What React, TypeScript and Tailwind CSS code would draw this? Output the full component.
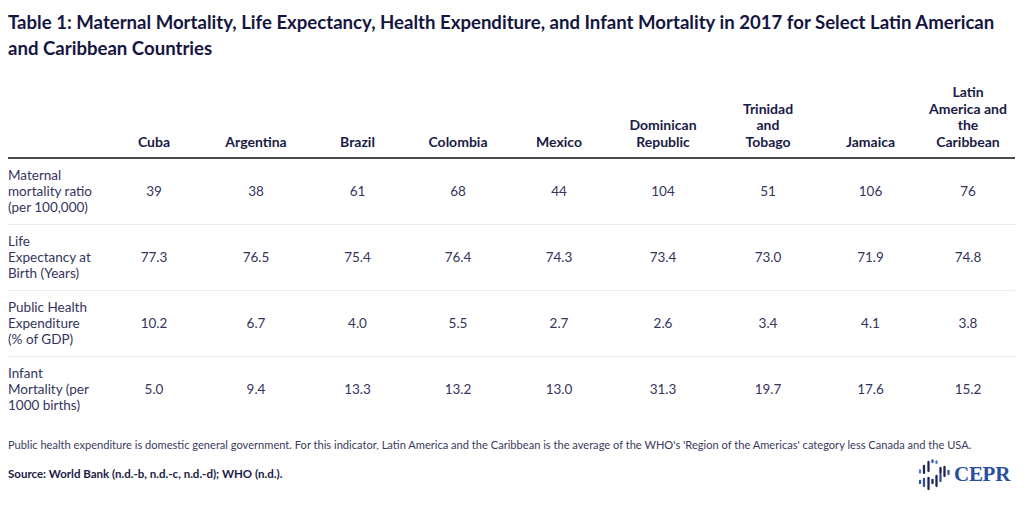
const countries = [
  ["Cuba"],
  ["Argentina"],
  ["Brazil"],
  ["Colombia"],
  ["Mexico"],
  ["Dominican", "Republic"],
  ["Trinidad", "and", "Tobago"],
  ["Jamaica"],
  ["Latin", "America and", "the", "Caribbean"],
];

const rows = [
  {
    label: ["Maternal", "mortality ratio", "(per 100,000)"],
    values: ["39", "38", "61", "68", "44", "104", "51", "106", "76"],
  },
  {
    label: ["Life", "Expectancy at", "Birth (Years)"],
    values: ["77.3", "76.5", "75.4", "76.4", "74.3", "73.4", "73.0", "71.9", "74.8"],
  },
  {
    label: ["Public Health", "Expenditure", "(% of GDP)"],
    values: ["10.2", "6.7", "4.0", "5.5", "2.7", "2.6", "3.4", "4.1", "3.8"],
  },
  {
    label: ["Infant", "Mortality (per", "1000 births)"],
    values: ["5.0", "9.4", "13.3", "13.2", "13.0", "31.3", "19.7", "17.6", "15.2"],
  },
];

const gridCols =
  "grid grid-cols-[95px_102px_102px_101px_100px_102px_106px_104px_101px_94px]";

function CeprLogo() {
  const navy = "#1f2456";
  const blue = "#2f4fa0";
  const light = "#5577cc";
  // x, top, bottom, colour
  const bars: [number, number, number, string][] = [
    [4, 13.5, 15.5, light],
    [8, 9, 16, navy],
    [12.5, 5, 14, navy],
    [16.5, 3.5, 5, blue],
    [20.5, 4.5, 6, light],
    [24.5, 11, 16, navy],
    [28.5, 10, 19, navy],
    [32.5, 14, 17, blue],
    [4, 24, 26, blue],
    [8, 22, 29, blue],
    [12.5, 21, 32, navy],
    [16.5, 23, 26, navy],
    [20.5, 19, 29, navy],
    [24.5, 18, 24, blue],
  ];
  return (
    <div className="flex items-center gap-[2px]">
      <svg width="36" height="34" viewBox="0 0 36 34">
        {bars.map(([x, y1, y2, c], i) => (
          <line
            key={i}
            x1={x}
            y1={y1}
            x2={x}
            y2={y2}
            stroke={c}
            strokeWidth="2.3"
            strokeLinecap="round"
          />
        ))}
      </svg>
      <span className="font-['Liberation_Serif',serif] font-bold text-[21px] leading-none text-[#2a4f9e] tracking-[-0.3px]">
        CEPR
      </span>
    </div>
  );
}

export default function App() {
  return (
    <main className="w-[1024px] h-[510px] bg-white px-2 pt-[9px] font-['Lato',sans-serif] text-[#34345c] overflow-hidden">
      <h1 className="text-[18.6px] leading-[26px] font-bold text-[#15163f] whitespace-nowrap">
        Table 1: Maternal Mortality, Life Expectancy, Health Expenditure, and Infant Mortality in 2017 for Select Latin American
        <br />
        and Caribbean Countries
      </h1>

      <div className="mt-[23px] w-[1007px]">
        <div className={`${gridCols} border-b-2 border-[#4b4b4b] pb-[7px] items-end`}>
          <div />
          {countries.map((c) => (
            <div
              key={c.join(" ")}
              className="text-center text-[14px] leading-[16.5px] font-bold text-[#1a1b45]"
            >
              {c.map((l) => (
                <div key={l}>{l}</div>
              ))}
            </div>
          ))}
        </div>

        {rows.map((r, i) => (
          <div
            key={i}
            className={`${gridCols} items-center pt-2 pb-[9px] text-[13.5px] leading-4 ${
              i < rows.length - 1 ? "border-b border-[#ececec]" : ""
            }`}
          >
            <div>
              {r.label.map((l) => (
                <div key={l} className="whitespace-nowrap">
                  {l}
                </div>
              ))}
            </div>
            {r.values.map((v, j) => (
              <div key={j} className="text-center">
                {v}
              </div>
            ))}
          </div>
        ))}
      </div>

      <p className="mt-[15px] text-[11.1px] leading-4 text-[#3a3a5c] whitespace-nowrap">
        Public health expenditure is domestic general government. For this indicator, Latin America and the Caribbean is the average of the WHO's 'Region of the Americas' category less Canada and the USA.
      </p>

      <div className="flex items-center justify-between mt-[4px] pr-[6px]">
        <p className="text-[11.5px] font-bold text-[#1a1b45]">
          Source: World Bank (n.d.-b, n.d.-c, n.d.-d); WHO (n.d.).
        </p>
        <CeprLogo />
      </div>
    </main>
  );
}
